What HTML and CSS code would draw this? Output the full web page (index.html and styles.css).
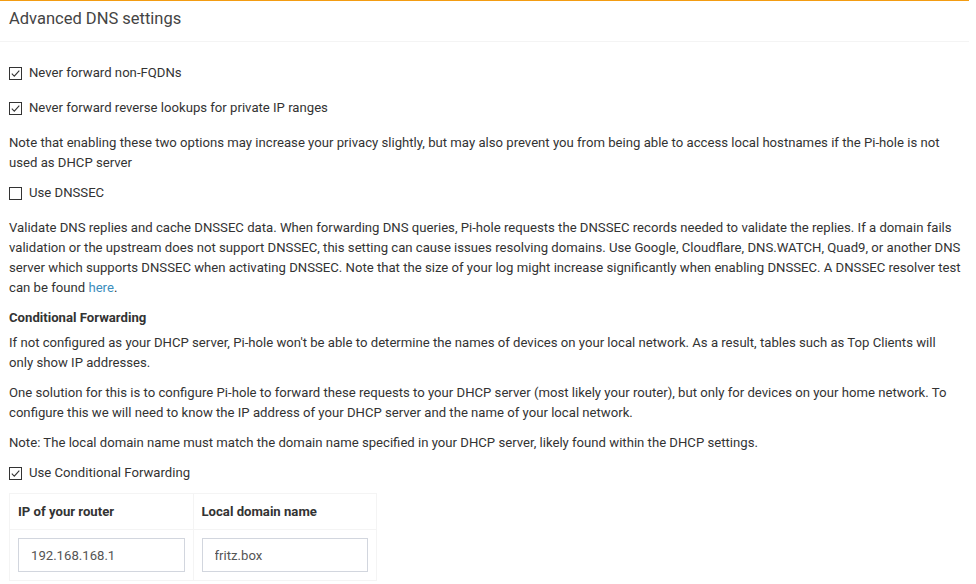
FILE: index.html
```html
<!DOCTYPE html>
<html>
<head>
<meta charset="utf-8">
<title>Advanced DNS settings</title>
<link rel="stylesheet" href="styles.css">
</head>
<body>
<div class="box">
  <div class="box-header">
    <h3 class="box-title">Advanced DNS settings</h3>
  </div>
  <div class="box-body">
    <label class="check first">
      <span class="cb"><svg viewBox="0 0 13 13" width="13" height="13"><rect x="0.5" y="0.5" width="12" height="12" fill="#fff" stroke="#333"/><path d="M2.8 6.6 L5.3 9.1 L10.3 3.6" fill="none" stroke="#333" stroke-width="1.1"/></svg></span>
      <span>Never forward non-FQDNs</span>
    </label>
    <label class="check">
      <span class="cb"><svg viewBox="0 0 13 13" width="13" height="13"><rect x="0.5" y="0.5" width="12" height="12" fill="#fff" stroke="#333"/><path d="M2.8 6.6 L5.3 9.1 L10.3 3.6" fill="none" stroke="#333" stroke-width="1.1"/></svg></span>
      <span>Never forward reverse lookups for private IP ranges</span>
    </label>
    <p class="note">Note that enabling these two options may increase your privacy slightly, but may also prevent you from being able to access local hostnames if the Pi-hole is not used as DHCP server</p>
    <label class="check">
      <span class="cb"><svg viewBox="0 0 13 13" width="13" height="13"><rect x="0.5" y="0.5" width="12" height="12" fill="#fff" stroke="#333"/></svg></span>
      <span>Use DNSSEC</span>
    </label>
    <p class="note">Validate DNS replies and cache DNSSEC data. When forwarding DNS queries, Pi-hole requests the DNSSEC records needed to validate the replies. If a domain fails validation or the upstream does not support DNSSEC, this setting can cause issues resolving domains. Use Google, Cloudflare, DNS.WATCH, Quad9, or another DNS server which supports DNSSEC when activating DNSSEC. Note that the size of your log might increase significantly when enabling DNSSEC. A DNSSEC resolver test can be found <a href="#">here</a>.</p>
    <h4 class="subhead">Conditional Forwarding</h4>
    <p class="note">If not configured as your DHCP server, Pi-hole won't be able to determine the names of devices on your local network. As a result, tables such as Top Clients will only show IP addresses.</p>
    <p class="note">One solution for this is to configure Pi-hole to forward these requests to your DHCP server (most likely your router), but only for devices on your home network. To configure this we will need to know the IP address of your DHCP server and the name of your local network.</p>
    <p class="note">Note: The local domain name must match the domain name specified in your DHCP server, likely found within the DHCP settings.</p>
    <label class="check">
      <span class="cb"><svg viewBox="0 0 13 13" width="13" height="13"><rect x="0.5" y="0.5" width="12" height="12" fill="#fff" stroke="#333"/><path d="M2.8 6.6 L5.3 9.1 L10.3 3.6" fill="none" stroke="#333" stroke-width="1.1"/></svg></span>
      <span>Use Conditional Forwarding</span>
    </label>
    <table class="cf-table">
      <thead>
        <tr><th>IP of your router</th><th>Local domain name</th></tr>
      </thead>
      <tbody>
        <tr>
          <td><input class="form-control" type="text" value="192.168.168.1"></td>
          <td><input class="form-control" type="text" value="fritz.box"></td>
        </tr>
      </tbody>
    </table>
  </div>
</div>
</body>
</html>
```
FILE: styles.css
```css
html, body {
  margin: 0;
  padding: 0;
  background: #fff;
}
body {
  font-family: Roboto, "Liberation Sans", sans-serif;
  font-size: 13.15px;
  line-height: 20px;
  color: #333;
}
.box {
  width: 969px;
  border-top: 1px solid #f39c12;
  background: #fff;
}
.box-header {
  height: 40px;
  border-bottom: 1px solid #f4f4f4;
  padding: 0 9px;
  display: flex;
  align-items: center;
}
.box-title {
  margin: 0;
  font-size: 16.5px;
  font-weight: 400;
  line-height: 20px;
  color: #444;
  position: relative;
  top: -2px;
}
.box-body {
  padding: 21px 7px 0 9px;
}
.check {
  display: flex;
  align-items: center;
  gap: 7px;
  height: 20px;
  margin-bottom: 15px;
  cursor: pointer;
}
.cb {
  display: flex;
  width: 13px;
  height: 13px;
  position: relative;
  top: 0.5px;
}
.note {
  margin: 0 0 10px 0;
}
a {
  color: #3c8dbc;
  text-decoration: none;
}
.subhead {
  margin: 0 0 5px 0;
  font-size: 13.15px;
  font-weight: 700;
  line-height: 20px;
}
.check + table {
  margin-top: -5px;
}
.cf-table {
  border-collapse: collapse;
  width: 368px;
  table-layout: fixed;
}
.cf-table th,
.cf-table td {
  border: 1px solid #f4f4f4;
  padding: 8px;
  text-align: left;
  vertical-align: top;
}
.cf-table th {
  font-weight: 700;
  line-height: 19px;
}
.form-control {
  display: block;
  box-sizing: border-box;
  width: 100%;
  height: 34px;
  margin: 0;
  padding: 6px 12px;
  border: 1px solid #d2d6de;
  border-radius: 0;
  font-family: Roboto, "Liberation Sans", sans-serif;
  font-size: 13.15px;
  color: #555;
  background: #fff;
}
```
